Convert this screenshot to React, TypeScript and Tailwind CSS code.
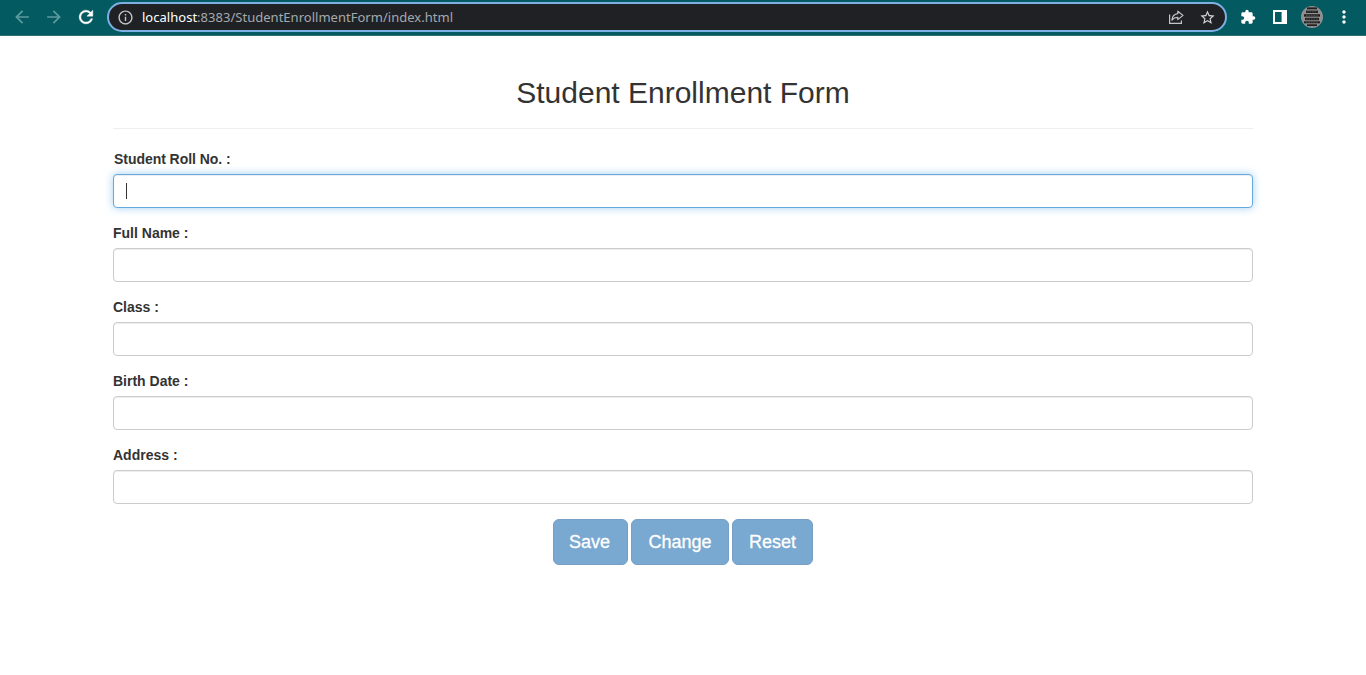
import type { ReactNode } from 'react';
import {
  MdArrowBack,
  MdArrowForward,
  MdExtension,
  MdMoreVert,
  MdOutlineInfo,
  MdRefresh,
  MdStarBorder,
} from 'react-icons/md';

function ShareIcon() {
  return (
    <svg width="16" height="16" viewBox="0 0 16 16" fill="none" stroke="#c3c6c9" strokeWidth="1.2">
      <path d="M1.6 5.5V14.4H13.4V11.6" />
      <path d="M9.8 2.2L15 6.4L9.8 10.6V8.4C7.2 8.3 5.4 9.2 3.9 11.1C4.3 7.5 6.4 5 9.8 4.6Z" strokeLinejoin="round" />
    </svg>
  );
}

function SidePanelIcon() {
  return (
    <svg width="14" height="14" viewBox="0 0 14 14">
      <path fill="#fff" fillRule="evenodd" d="M0 0H14V14H0ZM2 2V12H8.6V2Z" />
    </svg>
  );
}

function Avatar() {
  return (
    <svg width="22" height="22" viewBox="0 0 22 22">
      <circle cx="11" cy="11" r="11" fill="#8d8f90" />
      <g fill="#211f20">
        <path d="M6 1.4H16V3.3H6Z" />
        <path d="M5 4.6H17V7H5Z" />
        <path d="M3 8.2H19V10.6H3Z" />
        <path d="M4 11.8H18V14.2H4Z" />
        <path d="M3 15.3H19V17.3H3Z" />
        <path d="M6 18.3H16V20H6Z" />
      </g>
      <g stroke="#8d8f90" strokeWidth="0.4" strokeDasharray="1.5 1">
        <path d="M6 5.8H16M5 9.4H17M5 13H17M5 16.3H17" />
      </g>
    </svg>
  );
}

function BrowserBar() {
  return (
    <header className="flex h-9 items-start border-b border-[#2f6f74] bg-[#045a61] pl-[14px] pt-[2px]">
      <div className="flex h-[30px] w-[93px] items-center gap-4">
        <MdArrowBack className="size-4 shrink-0 scale-[1.28] text-[#5c9a9e]" />
        <MdArrowForward className="size-4 shrink-0 scale-[1.28] text-[#5c9a9e]" />
        <MdRefresh className="size-4 shrink-0 scale-[1.28] text-white [&>path:last-child]:stroke-white [&>path:last-child]:stroke-[0.5]" />
      </div>
      <div className="flex h-[30px] w-[1120px] items-center rounded-full border-2 border-[#7fb0e3] bg-[#202124] pl-[9px] pr-[9px]">
        <MdOutlineInfo className="-ml-px mr-px size-[17px] shrink-0 text-[#c3c6c9]" />
        <span className="ml-[7px] flex-1 whitespace-nowrap font-['Noto_Sans',sans-serif] text-[13px] leading-5 tracking-[0.02px] text-[#a3aaae]">
          <span className="text-white">localhost</span>:8383/StudentEnrollmentForm/index.html
        </span>
        <ShareIcon />
        <MdStarBorder className="ml-[15px] size-[17px] text-[#d3d5d7]" />
      </div>
      <div className="flex h-[30px] items-center pl-[13px] text-white">
        <MdExtension className="size-4" />
        <span className="ml-[17px]">
          <SidePanelIcon />
        </span>
        <span className="ml-[14px]">
          <Avatar />
        </span>
        <MdMoreVert className="ml-[11px] size-5" />
      </div>
    </header>
  );
}

function Field({ id, label, focused }: { id: string; label: string; focused?: boolean }) {
  return (
    <div className="mb-[15px]">
      <label
        htmlFor={id}
        className={`mb-[5px] block text-sm font-bold leading-5 ${focused ? 'pl-px tracking-[-0.05px]' : ''}`}
      >
        {label}
      </label>
      <div
        className={`flex h-[34px] items-center rounded-[4px] border bg-white px-3 ${
          focused
            ? 'border-[#66a9dc] shadow-[inset_0_1px_1px_rgba(0,0,0,0.075),0_0_8px_rgba(102,175,233,0.6)]'
            : 'border-[#ccc] shadow-[inset_0_1px_1px_rgba(0,0,0,0.075)]'
        }`}
      >
        {focused && <span className="h-4 w-px shrink-0 bg-[#333]" />}
        <input id={id} className="w-full min-w-0 bg-transparent text-sm text-[#555] outline-none" />
      </div>
    </div>
  );
}

function ActionButton({ className, children }: { className: string; children: ReactNode }) {
  return (
    <button
      disabled
      className={`h-[46px] rounded-[6px] border border-[#2e6da4] bg-[#337ab7] text-center text-lg leading-6 text-white opacity-65 [-webkit-text-stroke:0.3px_white] ${className}`}
    >
      {children}
    </button>
  );
}

export default function App() {
  return (
    <div className="min-h-[675px] bg-white font-['Liberation_Sans',Arial,sans-serif] text-[#333]">
      <BrowserBar />
      <main className="mx-auto w-[1140px] pt-10">
        <h2 className="text-center text-[30px] leading-[33px]">Student Enrollment Form</h2>
        <hr className="mb-5 mt-[19px] border-t border-[#eee]" />
        <form>
          <Field id="roll" label="Student Roll No. :" focused />
          <Field id="name" label="Full Name :" />
          <Field id="class" label="Class :" />
          <Field id="birth" label="Birth Date :" />
          <Field id="address" label="Address :" />
          <div className="flex justify-center gap-[3px]">
            <ActionButton className="w-[75px] pr-[2px]">Save</ActionButton>
            <ActionButton className="w-[98px]">Change</ActionButton>
            <ActionButton className="w-[81px]">Reset</ActionButton>
          </div>
        </form>
      </main>
    </div>
  );
}
